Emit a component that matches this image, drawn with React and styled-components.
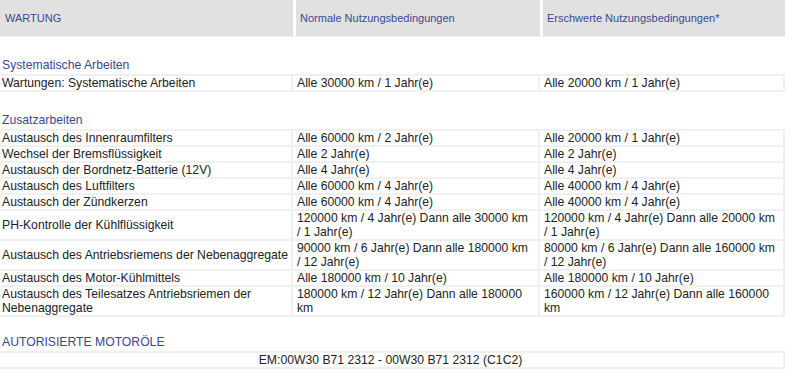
import React from 'react';
import styled, { createGlobalStyle } from 'styled-components';

const GlobalStyle = createGlobalStyle`
  html, body {
    margin: 0;
    padding: 0;
    background: #ffffff;
    overflow: hidden;
  }
  body {
    font-family: "Liberation Sans", Arial, sans-serif;
    color: #222222;
  }
`;

const Page = styled.div`
  width: 785px;
`;

const HeaderBar = styled.div`
  display: grid;
  grid-template-columns: 293px 244px 242px;
  column-gap: 3px;
  height: 36px;
  border-bottom: 1px solid #f1f1f1;
`;

const HeaderCell = styled.div`
  display: flex;
  align-items: center;
  padding-left: ${props => (props.first ? '5px' : '4px')};
  background: #e1e1e1;
  color: #3a4796;
  font-size: 11px;
`;

const SectionTitle = styled.div`
  margin: ${props => props.gap || 21}px 0 2px;
  padding-left: 2px;
  font-size: 12.2px;
  line-height: 14px;
  color: #3a4796;
  text-transform: ${props => (props.upper ? 'uppercase' : 'none')};
`;

const Table = styled.table`
  width: 789px;
  margin-left: -4px;
  table-layout: fixed;
  border-collapse: separate;
  border-spacing: 2px;
  background: #f0f0f0;
`;

const Cell = styled.td`
  box-sizing: border-box;
  width: ${props => (props.w ? `${props.w}px` : 'auto')};
  background: #ffffff;
  padding: 0 ${props => (props.tight ? 0 : 4)}px 0 4px;
  font-size: 12.2px;
  line-height: 14px;
  color: #222222;
  vertical-align: middle;
  text-align: ${props => (props.center ? 'center' : 'left')};
`;

const widths = [293, 245, 243];

const systematic = [
  ['Wartungen: Systematische Arbeiten', 'Alle 30000 km / 1 Jahr(e)', 'Alle 20000 km / 1 Jahr(e)'],
];

const extra = [
  ['Austausch des Innenraumfilters', 'Alle 60000 km / 2 Jahr(e)', 'Alle 20000 km / 1 Jahr(e)'],
  ['Wechsel der Bremsflüssigkeit', 'Alle 2 Jahr(e)', 'Alle 2 Jahr(e)'],
  ['Austausch der Bordnetz-Batterie (12V)', 'Alle 4 Jahr(e)', 'Alle 4 Jahr(e)'],
  ['Austausch des Luftfilters', 'Alle 60000 km / 4 Jahr(e)', 'Alle 40000 km / 4 Jahr(e)'],
  ['Austausch der Zündkerzen', 'Alle 60000 km / 4 Jahr(e)', 'Alle 40000 km / 4 Jahr(e)'],
  ['PH-Kontrolle der Kühlflüssigkeit', '120000 km / 4 Jahr(e) Dann alle 30000 km / 1 Jahr(e)', '120000 km / 4 Jahr(e) Dann alle 20000 km / 1 Jahr(e)'],
  ['Austausch des Antriebsriemens der Nebenaggregate', '90000 km / 6 Jahr(e) Dann alle 180000 km / 12 Jahr(e)', '80000 km / 6 Jahr(e) Dann alle 160000 km / 12 Jahr(e)'],
  ['Austausch des Motor-Kühlmittels', 'Alle 180000 km / 10 Jahr(e)', 'Alle 180000 km / 10 Jahr(e)'],
  ['Austausch des Teilesatzes Antriebsriemen der Nebenaggregate', '180000 km / 12 Jahr(e) Dann alle 180000 km', '160000 km / 12 Jahr(e) Dann alle 160000 km'],
];

function MaintenanceTable({ rows }) {
  return (
    <Table>
      <tbody>
        {rows.map(row => (
          <tr key={row[0]}>
            {row.map((text, i) => (
              <Cell key={i} w={widths[i]} tight={i === 0}>{text}</Cell>
            ))}
          </tr>
        ))}
      </tbody>
    </Table>
  );
}

export default function App() {
  return (
    <Page>
      <GlobalStyle />
      <HeaderBar>
        <HeaderCell first>WARTUNG</HeaderCell>
        <HeaderCell>Normale Nutzungsbedingungen</HeaderCell>
        <HeaderCell>Erschwerte Nutzungsbedingungen*</HeaderCell>
      </HeaderBar>

      <SectionTitle>Systematische Arbeiten</SectionTitle>
      <MaintenanceTable rows={systematic} />

      <SectionTitle>Zusatzarbeiten</SectionTitle>
      <MaintenanceTable rows={extra} />

      <SectionTitle upper gap={18}>Autorisierte Motoröle</SectionTitle>
      <Table>
        <tbody>
          <tr>
            <Cell center>EM:00W30 B71 2312 - 00W30 B71 2312 (C1C2)</Cell>
          </tr>
        </tbody>
      </Table>
    </Page>
  );
}
